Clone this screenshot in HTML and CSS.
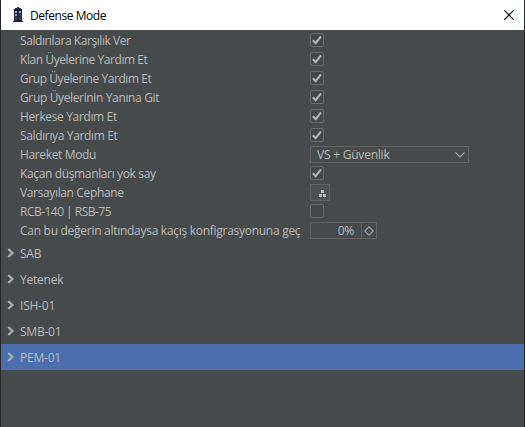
FILE: index.html
```
<!DOCTYPE html>
<html lang="tr">
<head>
<meta charset="utf-8">
<title>Defense Mode</title>
<link rel="stylesheet" href="styles.css">
</head>
<body>
<svg width="0" height="0" class="defs">
  <symbol id="check" viewBox="0 0 14 14"><rect x=".5" y=".5" width="13" height="13" rx="1.5" fill="#434748" stroke="#6b6b6b"/><path d="M2.9 7.2 5.7 10.2 11 3.4" fill="none" stroke="#b4b6b7" stroke-width="2.1"/></symbol>
  <symbol id="box" viewBox="0 0 14 14"><rect x=".5" y=".5" width="13" height="13" rx="1.5" fill="#434748" stroke="#6b6b6b"/></symbol>
  <symbol id="chevron" viewBox="0 0 8 10"><path d="M1.2 1 5.4 5 1.2 9" fill="none" stroke="#adadad" stroke-width="2.3"/></symbol>
</svg>
<div class="window">
  <header class="titlebar">
    <svg class="logo" width="12" height="16" viewBox="0 0 12 16">
      <path d="M5 0h2v1h2v1h1v12h1v1H1v-1h1V2h1V1h2z" fill="#252b49"/>
      <path d="M2 3h8M2 14h8" stroke="#10152c"/>
      <path d="M3 4h2v2H3zM7 4h2v2H7z" fill="#9aa6c0"/>
      <path d="M3 7h2v2H3z" fill="#8d9bb8"/>
      <path d="M7 7h2v2H7zM3 10h2v3H3zM7 10h2v3H7z" fill="#3b4366"/>
      <path d="M6 3v11" stroke="#141931"/>
    </svg>
    <h1 class="title">Defense Mode</h1>
    <svg class="close" width="10" height="10" viewBox="0 0 10 10"><path d="M.3.3 9.7 9.7M9.7.3.3 9.7" stroke="#000" stroke-width="1.2"/></svg>
  </header>
  <main class="form">
    <div class="row"><span class="label tight">Saldırılara Karşılık Ver</span><svg class="tick"><use href="#check"/></svg></div>
    <div class="row"><span class="label tight">Klan Üyelerine Yardım Et</span><svg class="tick"><use href="#check"/></svg></div>
    <div class="row"><span class="label tight">Grup Üyelerine Yardım Et</span><svg class="tick"><use href="#check"/></svg></div>
    <div class="row"><span class="label">Grup Üyelerinin Yanına Git</span><svg class="tick"><use href="#check"/></svg></div>
    <div class="row"><span class="label">Herkese Yardım Et</span><svg class="tick"><use href="#check"/></svg></div>
    <div class="row"><span class="label">Saldırıya Yardım Et</span><svg class="tick"><use href="#check"/></svg></div>
    <div class="row"><span class="label">Hareket Modu</span><div class="select"><span>VS + Güvenlik</span><svg width="10" height="6" viewBox="0 0 10 6"><path d="M.5.5 5 5 9.5.5" fill="none" stroke="#a4a6a7" stroke-width="1.1"/></svg></div></div>
    <div class="row"><span class="label">Kaçan düşmanları yok say</span><svg class="tick"><use href="#check"/></svg></div>
    <div class="row"><span class="label">Varsayılan Cephane</span><div class="ammo"><svg width="7" height="7" viewBox="0 0 7 7"><path d="M2 0h3v3H2zM0 4h3v3H0zM4 4h3v3H4z" fill="#bdbdbd"/></svg></div></div>
    <div class="row"><span class="label tightest">RCB-140 | RSB-75</span><svg class="tick"><use href="#box"/></svg></div>
    <div class="row"><span class="label long">Can bu değerin altındaysa kaçış konfigrasyonuna geç</span><div class="spinner"><span class="value">0%</span><span class="step"><svg width="10" height="10" viewBox="0 0 10 10"><path d="M.8 5 5 .8 9.2 5 5 9.2z" fill="none" stroke="#a0a2a3" stroke-width="1.1"/></svg></span></div></div>
  </main>
  <nav class="sections">
    <div class="section"><svg class="arrow"><use href="#chevron"/></svg>SAB</div>
    <div class="section"><svg class="arrow"><use href="#chevron"/></svg>Yetenek</div>
    <div class="section"><svg class="arrow"><use href="#chevron"/></svg>ISH-01</div>
    <div class="section"><svg class="arrow"><use href="#chevron"/></svg>SMB-01</div>
    <div class="section selected"><svg class="arrow"><use href="#chevron"/></svg>PEM-01</div>
  </nav>
</div>
</body>
</html>
```
FILE: styles.css
```
* { box-sizing: border-box; }
body { margin: 0; background: #464a4b; font: 12px/18px "Open Sans", "Noto Sans", sans-serif; color: #bbbbbb; letter-spacing: -0.22px; }
svg { display: block; flex: none; }
.defs { position: absolute; }
.window { width: 525px; height: 427px; border: solid #242829; border-width: 0 1px; background: #464a4b; overflow: hidden; }
.titlebar { display: flex; align-items: center; height: 30px; padding: 0 10px 0 11px; background: #fff; color: #000; }
.title { margin: 0 auto 0 6px; padding-top: 1px; font-size: 12px; font-weight: 400; letter-spacing: -0.43px; }
.close { margin-bottom: 1px; }
.form { padding-top: 1px; }
.row { display: grid; grid-template-columns: 290px auto; align-items: center; justify-content: start; height: 19px; padding-left: 19px; }
.label { white-space: nowrap; letter-spacing: -0.36px; }
.tight { letter-spacing: -0.43px; }
.tightest { letter-spacing: -0.52px; }
.long { letter-spacing: -0.28px; }
.tick { width: 14px; height: 14px; margin-bottom: 1px; }
.select, .ammo, .spinner { display: flex; align-items: center; height: 17px; border: 1px solid #646464; line-height: 15px; }
.select { width: 159px; justify-content: space-between; padding: 0 3px 0 6px; }
.ammo { width: 20px; justify-content: flex-end; align-items: flex-end; padding: 0 3px 3px 0; background: #4c5052; }
.spinner { width: 67px; }
.value { flex: 1; text-align: right; padding-right: 7px; }
.step { display: flex; align-items: center; justify-content: center; width: 15px; height: 15px; border-left: 1px solid #646464; }
.section { display: flex; align-items: center; height: 26px; padding: 1px 0 0 6px; }
.arrow { width: 8px; height: 10px; margin: 0 5px 1px 0; }
.selected { background: #4b6eaf; }
```
